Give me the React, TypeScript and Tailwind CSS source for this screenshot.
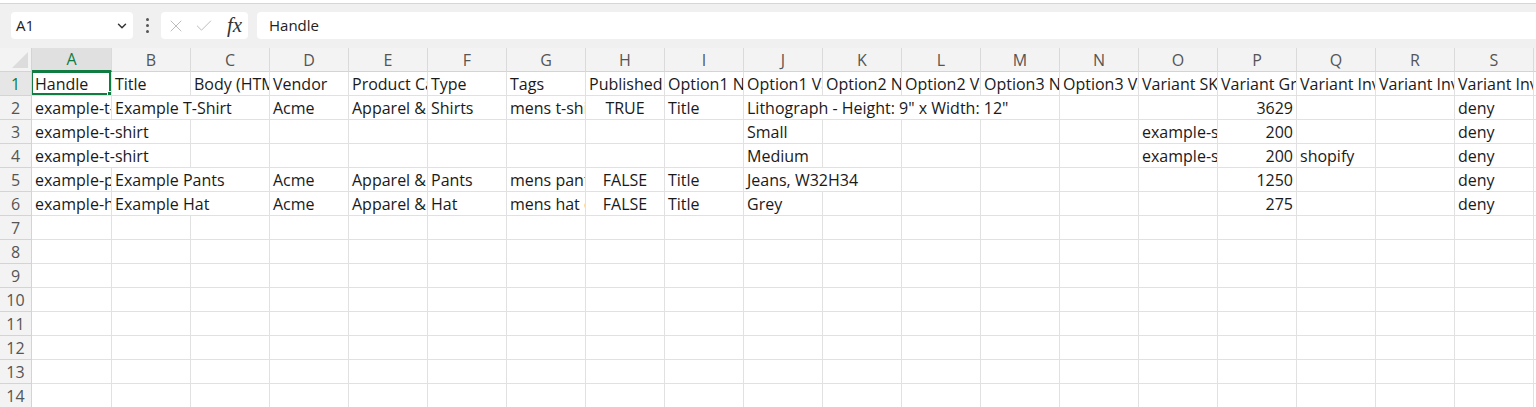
import { ChevronDown, X, Check } from 'lucide-react';

const COLS = ['A', 'B', 'C', 'D', 'E', 'F', 'G', 'H', 'I', 'J', 'K', 'L', 'M', 'N', 'O', 'P', 'Q', 'R', 'S'];

type Align = 'l' | 'r' | 'c';

// each row: 19 cells. span = how many columns overflowing text covers
const ROWS: string[][] = [
    ['Handle', 'Title', 'Body (HTML)', 'Vendor', 'Product Category', 'Type', 'Tags', 'Published', 'Option1 Name', 'Option1 Value', 'Option2 Name', 'Option2 Value', 'Option3 Name', 'Option3 Value', 'Variant SKU', 'Variant Grams', 'Variant Inventory Tracker', 'Variant Inventory Qty', 'Variant Inventory Policy'],
    ['example-t-shirt', 'Example T-Shirt', '', 'Acme', 'Apparel & Accessories', 'Shirts', 'mens t-shirt example', 'TRUE', 'Title', 'Lithograph - Height: 9" x Width: 12"', '', '', '', '', '', '3629', '', '', 'deny'],
    ['example-t-shirt', '', '', '', '', '', '', '', '', 'Small', '', '', '', '', 'example-shirt-s', '200', '', '', 'deny'],
    ['example-t-shirt', '', '', '', '', '', '', '', '', 'Medium', '', '', '', '', 'example-shirt-m', '200', 'shopify', '', 'deny'],
    ['example-pants', 'Example Pants', '', 'Acme', 'Apparel & Accessories', 'Pants', 'mens pants example', 'FALSE', 'Title', 'Jeans, W32H34', '', '', '', '', '', '1250', '', '', 'deny'],
    ['example-hat', 'Example Hat', '', 'Acme', 'Apparel & Accessories', 'Hat', 'mens hat example', 'FALSE', 'Title', 'Grey', '', '', '', '', '', '275', '', '', 'deny'],
];

const SPANS: Record<string, number> = {
    '1-1': 2,
    '1-9': 4,
    '2-0': 2,
    '3-0': 2,
    '4-1': 2,
    '4-9': 2,
    '5-1': 2,
};

const alignOf = (r: number, c: number, v: string): Align => {
    if (r === 0) return 'l';
    if (v === 'TRUE' || v === 'FALSE') return 'c';
    if (/^\d+$/.test(v)) return 'r';
    return 'l';
};

const TOTAL_ROWS = 14;

function Cell({ value, span, align, selected }: { value: string; span: number; align: Align; selected?: boolean }) {
    const justify = align === 'r' ? 'justify-end pr-[3px]' : align === 'c' ? 'justify-center' : 'justify-start pl-[3px]';
    const spanCls = span === 4 ? 'col-span-4' : span === 2 ? 'col-span-2' : 'col-span-1';
    return (
        <div className={`${spanCls} relative h-6 flex items-center ${justify} bg-white border-r border-b border-[#e1e1e1] overflow-hidden whitespace-nowrap text-[16px] text-[#1a1a1a] leading-none`}>
            {value}
            {selected && (
                <>
                    <div className="absolute -left-px -top-px right-0 bottom-0 border-2 border-[#107c41]" />
                    <div className="absolute -right-[1px] -bottom-[1px] w-[5px] h-[5px] bg-[#107c41] border border-white" />
                </>
            )}
        </div>
    );
}

export default function App() {
    const rows = Array.from({ length: TOTAL_ROWS }, (_, i) => ROWS[i] ?? Array(19).fill(''));

    return (
        <div className="w-[1536px] h-[407px] overflow-hidden bg-[#f0f0f0] text-[#1a1a1a]" style={{ fontFamily: '"Open Sans", "Noto Sans", sans-serif' }}>
            {/* top strip */}
            <div className="h-[4px] bg-white border-b border-[#d6d6d6]" />

            {/* formula bar */}
            <div className="flex items-center h-[27px] mt-[8px] pl-[11px]">
                <div className="w-[122px] h-[27px] bg-white rounded-[4px] flex items-center justify-between pl-[5px] pr-[4px]">
                    <span className="text-[15px] text-[#222]">A1</span>
                    <ChevronDown size={14} strokeWidth={2.5} className="text-[#333]" />
                </div>
                <div className="w-[28px] flex flex-col items-center gap-[3px]">
                    <span className="w-[3px] h-[3px] rounded-full bg-[#555]" />
                    <span className="w-[3px] h-[3px] rounded-full bg-[#555]" />
                    <span className="w-[3px] h-[3px] rounded-full bg-[#555]" />
                </div>
                <div className="w-[87px] h-[27px] bg-white rounded-[4px] flex items-center pl-[5px] gap-[8px]">
                    <X size={20} strokeWidth={1.2} className="text-[#bdbdbd]" />
                    <Check size={20} strokeWidth={1.2} className="text-[#bdbdbd]" />
                    <span className="ml-[5px] text-[21px] italic text-[#333] leading-none" style={{ fontFamily: '"Liberation Serif", serif' }}>fx</span>
                </div>
                <div className="ml-[9px] flex-1 h-[27px] bg-white rounded-l-[4px] flex items-center pl-[12px]">
                    <span className="text-[15px] text-[#222]">Handle</span>
                </div>
            </div>

            {/* sheet */}
            <div className="mt-[9px] grid grid-cols-[32px_80px_repeat(18,79px)_1fr]">
                {/* corner */}
                <div className="h-6 relative bg-[#f3f3f3] border-r border-b border-[#d4d4d4]">
                    <div className="absolute right-[3px] bottom-[3px] w-0 h-0 border-l-[16px] border-l-transparent border-b-[16px] border-b-[#dcdcdc]" />
                </div>
                {COLS.map((c, i) => (
                    <div
                        key={c}
                        className={`h-6 flex items-center justify-center text-[16px] border-r border-[#dadada] ${i === 0 ? 'bg-[#e0e0e0] text-[#107c41] border-b-2 border-b-[#107c41]' : 'bg-[#f3f3f3] text-[#555] border-b border-b-[#d4d4d4]'}`}
                    >
                        {c}
                    </div>
                ))}
                <div className="h-6 bg-[#f3f3f3] border-b border-[#d4d4d4]" />

                {rows.map((row, r) => {
                    const cells: React.ReactNode[] = [];
                    let c = 0;
                    while (c < 19) {
                        const span = SPANS[`${r}-${c}`] ?? 1;
                        cells.push(
                            <Cell key={c} value={row[c]} span={span} align={alignOf(r, c, row[c])} selected={r === 0 && c === 0} />
                        );
                        c += span;
                    }
                    return (
                        <div key={r} className="contents">
                            <div className={`h-6 flex items-center justify-center text-[16px] border-r border-b border-[#d4d4d4] ${r === 0 ? 'bg-[#e6e6e6] text-[#107c41]' : 'bg-[#f3f3f3] text-[#555]'}`}>
                                {r + 1}
                            </div>
                            {cells}
                            <div className="h-6 bg-white border-b border-[#e1e1e1]" />
                        </div>
                    );
                })}
            </div>
        </div>
    );
}
